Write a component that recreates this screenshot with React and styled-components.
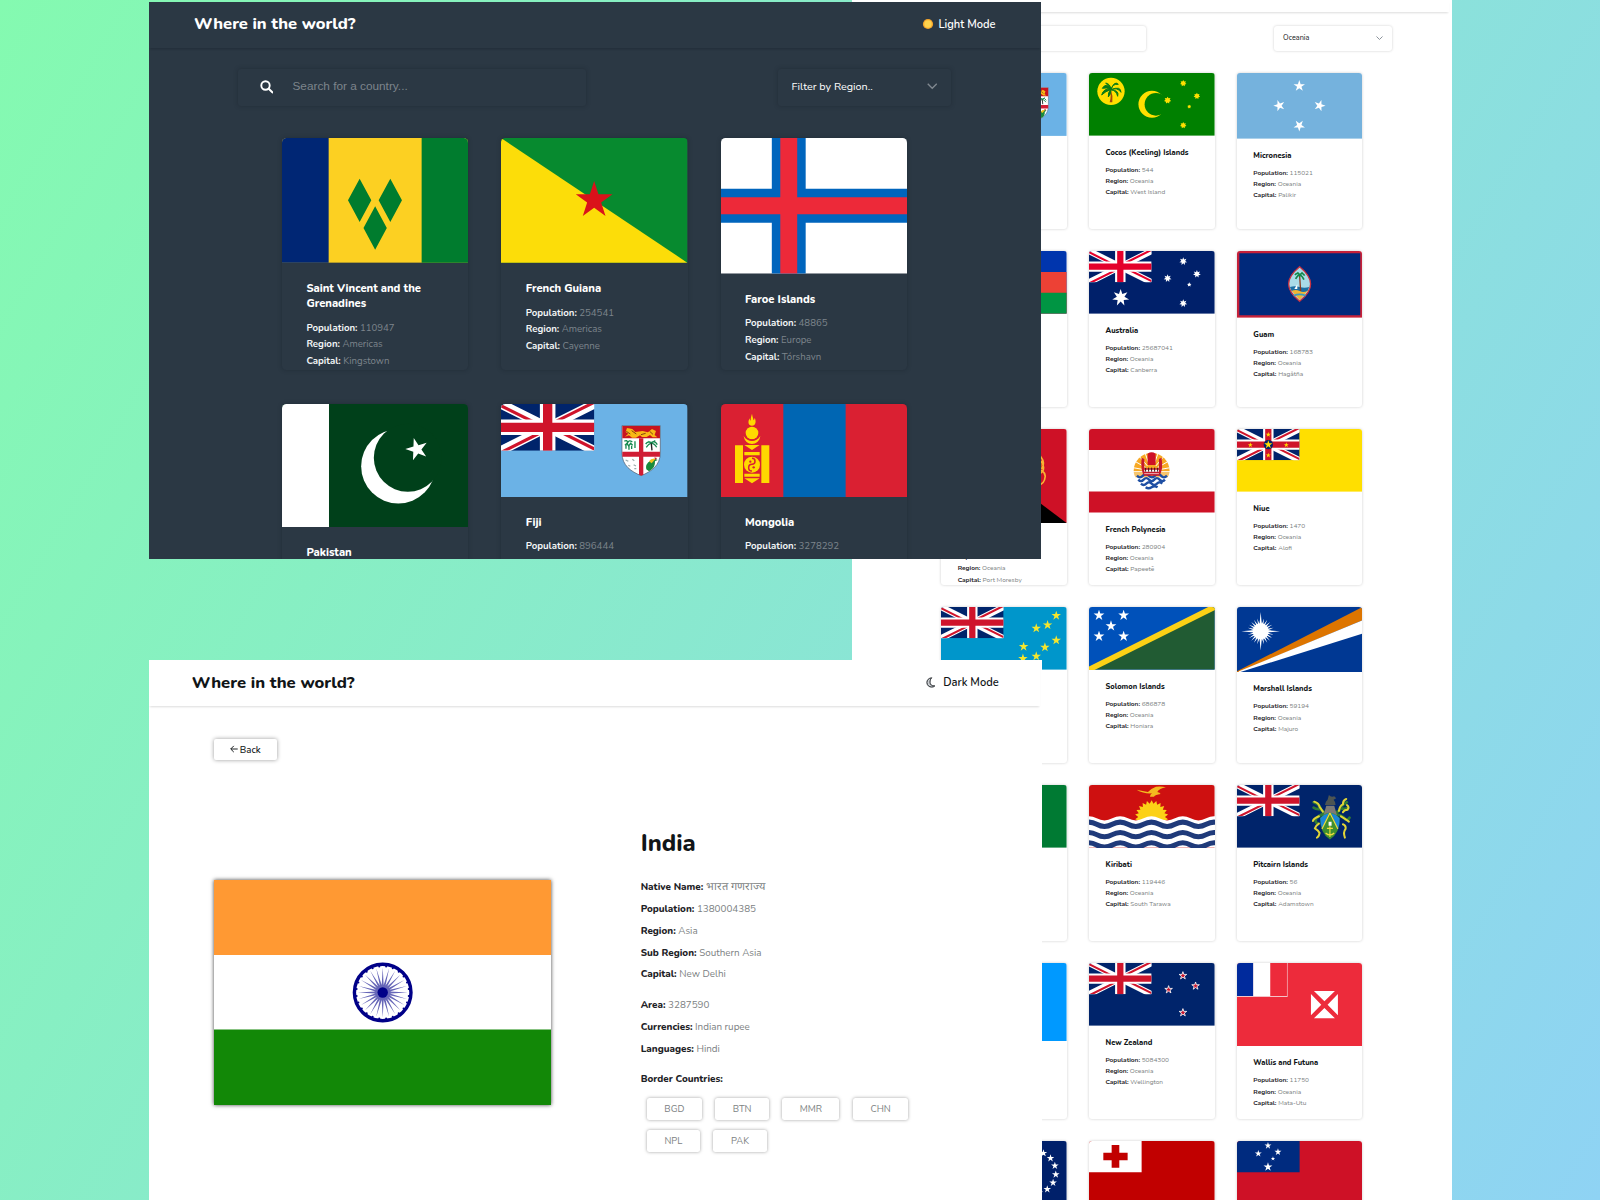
import React, { useId } from "react";
import styled, { createGlobalStyle, ThemeProvider } from "styled-components";

/* ---------- themes ---------- */

const dark = {
  bg: "#2b3844",
  text: "#ffffff",
  strong: "#f4f6f7",
  muted: "#7d858c",
  line: "rgba(18, 26, 34, 0.35)",
  rule: "rgba(18, 26, 34, 0.35)",
  u: 1,
};

const light = {
  bg: "#ffffff",
  text: "#111517",
  strong: "#1d2226",
  muted: "#7c7f82",
  line: "rgba(0, 0, 0, 0.2)",
  rule: "rgba(0, 0, 0, 0.14)",
  u: 0.674,
};

const detail = { ...light, u: 1 };

const px = (n) => ({ theme }) => `${n * theme.u}px`;

const GlobalStyle = createGlobalStyle`
  *, *::before, *::after { box-sizing: border-box; }
  html, body { margin: 0; padding: 0; }
  body { font-family: Nunito, Lato, "Open Sans", sans-serif; overflow: hidden; }
`;

/* ---------- canvas and windows ---------- */

const Canvas = styled.div`
  position: relative;
  width: 1600px;
  height: 1200px;
  overflow: hidden;
  background: linear-gradient(120deg, #84fab0 0%, #8fd3f4 100%);
`;

const Window = styled.section`
  position: absolute;
  left: ${(p) => p.$x}px;
  top: ${(p) => p.$y}px;
  width: ${(p) => p.$w}px;
  height: ${(p) => p.$h}px;
  overflow: hidden;
  background: ${({ theme }) => theme.bg};
  color: ${({ theme }) => theme.text};
`;

const Header = styled.header`
  display: flex;
  align-items: center;
  justify-content: space-between;
  height: ${(p) => p.$h}px;
  padding: 0 ${(p) => p.$right}px ${(p) => p.$lift || 0}px ${(p) => p.$left}px;
  margin-right: ${(p) => p.$short || 0}px;
  box-shadow: 0 2px 2px -1px ${({ theme }) => theme.rule};
`;

const Brand = styled.h1`
  margin: 0;
  font-size: ${(p) => p.$size}px;
  line-height: 22px;
  font-weight: 800;
  white-space: nowrap;
`;

const ModeToggle = styled.div`
  display: flex;
  align-items: center;
  gap: ${(p) => p.$gap}px;
  padding-top: 1.4px;
  font-size: 11.1px;
  line-height: 16px;
  font-weight: 600;
  white-space: nowrap;
  svg { display: block; margin-bottom: 1.4px; }
`;

/* ---------- filters ---------- */

const Filters = styled.div`
  display: flex;
  justify-content: space-between;
  width: ${(p) => p.$w}px;
  height: ${(p) => p.$h}px;
  margin: ${(p) => p.$top}px 0 0 ${(p) => p.$left}px;
`;

const Field = styled.div`
  display: flex;
  align-items: center;
  width: ${(p) => p.$w}px;
  padding: 0 ${px(14)};
  border-radius: 3px;
  box-shadow: 0 0 ${px(4)} ${({ theme }) => theme.line};
`;

const SearchField = styled(Field)`
  gap: 19.5px;
  padding-left: 21.5px;
`;

const Placeholder = styled.span`
  padding-bottom: 2.5px;
  font-family: "Liberation Sans", Arial, sans-serif;
  font-size: 11.8px;
  color: ${({ theme }) => theme.muted};
`;

const SelectField = styled(Field)`
  justify-content: space-between;
  padding-bottom: ${px(1.4)};
  font-size: ${px(10.8)};
  svg { display: block; }
`;

/* ---------- country cards ---------- */

const Grid = styled.div`
  display: grid;
  grid-template-columns: repeat(3, ${px(186.3)});
  grid-auto-rows: ${(p) => p.$row}px;
  gap: ${(p) => p.$gapY}px ${px(33)};
  margin: ${(p) => p.$top}px 0 0 ${(p) => p.$left}px;
`;

const CardBox = styled.article`
  overflow: hidden;
  border-radius: ${px(4.5)};
  box-shadow: 0 0 ${px(4.5)} ${({ theme }) => theme.line};
`;

const FlagSvg = styled.svg`
  display: block;
  width: 100%;
`;

const CardBody = styled.div`
  padding: ${px(17.8)} ${px(24.4)} 0;
`;

const CardTitle = styled.h2`
  margin: 0 0 ${px(8.6)};
  font-size: ${px(11.15)};
  line-height: ${px(15)};
  font-weight: 800;
`;

const Fact = styled.p`
  margin: 0;
  font-size: ${px(9.65)};
  line-height: ${px(16.8)};
  color: ${({ theme }) => theme.muted};
  white-space: nowrap;
  b {
    font-weight: 700;
    color: ${({ theme }) => theme.strong};
  }
`;

/* ---------- detail page ---------- */

const DetailBody = styled.div`
  padding: 33.3px 0 0 64.5px;
`;

const BackButton = styled.button`
  display: flex;
  align-items: center;
  justify-content: center;
  gap: 2px;
  width: 63.5px;
  height: 21px;
  padding: 0;
  border: 0;
  border-radius: 2px;
  background: #fff;
  box-shadow: 0 0 4px rgba(0, 0, 0, 0.4);
  font: 500 9.6px Nunito, Lato, sans-serif;
  color: #111517;
`;

const DetailColumns = styled.div`
  display: flex;
  align-items: flex-start;
  gap: 89.7px;
`;

const BigFlag = styled.div`
  width: 337.5px;
  height: 225px;
  margin-top: 119.8px;
  box-shadow: 0 0 4px rgba(0, 0, 0, 0.75);
`;

const Info = styled.div`
  width: 290px;
  padding-top: 68px;
`;

const CountryName = styled.h2`
  margin: 0 0 18.3px;
  font-size: 23.6px;
  line-height: 30px;
  font-weight: 800;
`;

const Facts = styled.div`
  margin-bottom: 8.5px;
  font-size: 9.85px;
  line-height: 21.85px;
  color: ${({ theme }) => theme.muted};
  white-space: nowrap;
  p { margin: 0; height: 21.85px; }
  b { font-weight: 800; color: ${({ theme }) => theme.strong}; }
  span:lang(hi) { font-size: 11px; line-height: 1; }
`;

const Borders = styled.div`
  display: flex;
  flex-wrap: wrap;
  gap: 10px 13.4px;
  margin-top: 1.4px;
  padding: 0 0 0 6.2px;
`;

const BorderTag = styled.span`
  display: flex;
  align-items: center;
  justify-content: center;
  width: ${(p) => p.$w}px;
  height: 22px;
  border-radius: 2.5px;
  box-shadow: 0 0 3.5px rgba(0, 0, 0, 0.38);
  font-size: 9.4px;
  color: ${({ theme }) => theme.muted};
`;

/* ---------- flag drawing helpers ---------- */

const starPoints = (cx, cy, r, n = 5, k = 0.382, rot = -90) =>
  Array.from({ length: n * 2 }, (_, i) => {
    const a = ((rot + (i * 180) / n) * Math.PI) / 180;
    const q = i % 2 ? r * k : r;
    return `${(cx + q * Math.cos(a)).toFixed(2)},${(cy + q * Math.sin(a)).toFixed(2)}`;
  }).join(" ");

const Star = ({ x, y, r, n, k, rot, fill = "#fff", ...rest }) => (
  <polygon points={starPoints(x, y, r, n, k, rot)} fill={fill} {...rest} />
);

const Jack = ({ w = 188, h = 94, blue = "#00246b", red = "#cf142b" }) => {
  const id = useId();
  return (
    <svg x="0" y="0" width={w} height={h} viewBox="0 0 60 30" preserveAspectRatio="none">
      <clipPath id={id}>
        <path d="M30,15h30v15zv15h-30zh-30v-15zv-15h30z" />
      </clipPath>
      <path d="M0,0h60v30H0z" fill={blue} />
      <path d="M0,0L60,30M60,0L0,30" stroke="#fff" strokeWidth="6" />
      <path d="M0,0L60,30M60,0L0,30" clipPath={`url(#${id})`} stroke={red} strokeWidth="4" />
      <path d="M30,0v30M0,15h60" stroke="#fff" strokeWidth="10" />
      <path d="M30,0v30M0,15h60" stroke={red} strokeWidth="6" />
    </svg>
  );
};

const Flag = ({ w = 377, h = 188, bg, children }) => (
  <FlagSvg viewBox={`0 0 ${w} ${h}`}>
    <rect width={w} height={h} fill={bg} />
    {children}
  </FlagSvg>
);

const SouthernCross = () => (
  <>
    <Star x={283} y={31} r={12} n={7} k={0.5} />
    <Star x={236} y={82} r={12} n={7} k={0.5} />
    <Star x={324} y={69} r={12} n={7} k={0.5} />
    <Star x={301} y={101} r={7} k={0.5} />
    <Star x={283} y={157} r={12} n={7} k={0.5} />
  </>
);

/* ---------- flags ---------- */

const SaintVincent = () => (
  <Flag w={559} h={374} bg="#fcd022">
    <path d="M0,0h140v374H0z" fill="#002674" />
    <path d="M419,0h140v374H419z" fill="#007c2e" />
    <path
      d="M233,122l35,65-35,65-35-65zM325,122l35,65-35,65-35-65zM279.500,205l35,65-35,65-35-65z"
      fill="#007c2e"
    />
  </Flag>
);

const FrenchGuiana = () => (
  <Flag w={559} h={374} bg="#078a2f">
    <path d="M0,0V374H559z" fill="#fcdd09" />
    <Star x={279.5} y={187} r={58} fill="#da121a" />
  </Flag>
);

const Faroe = () => (
  <Flag w={22} h={16} bg="#fff">
    <path d="M6,0h4v16H6zM0,6h22v4H0z" fill="#0065bd" />
    <path d="M7,0h2v16H7zM0,7h22v2H0z" fill="#ed2939" />
  </Flag>
);

const Pakistan = () => (
  <Flag w={559} h={370} bg="#00401a">
    <path d="M0,0h141v370H0z" fill="#fff" />
    <circle cx="349" cy="187" r="111.500" fill="#fff" />
    <circle cx="377.500" cy="161.500" r="102" fill="#00401a" />
    <Star x={405} y={136} r={35} rot={-34} />
  </Flag>
);

const Fiji = () => (
  <Flag w={559} h={280} bg="#6bb2e6">
    <Jack w={280} h={140} />
    <path d="M363,65h115v82c0,38-28,56-57.500,68C391,203,363,185,363,147z" fill="#fff" stroke="#4b5566" strokeWidth="2" />
    <path d="M364,66h113v37H364z" fill="#c8141e" />
    <path
      d="M372,98l10-9-8-5 4-12 16,3 9,9 22-3 16,4 12-10 12,6-4,12 8,7h-14l-8-7-10,6h-14l-6-5-12,7h-12l-9-7z"
      fill="#f9b916"
    />
    <path d="M376,82l12,8M392,80l14,10M420,92l14-4M446,82l10,9" stroke="#6b2a10" strokeWidth="2.500" />
    <path d="M414,103h13v109l-6,3-7-3zM364,143h113v15H364z" fill="#d01c34" />
    <g stroke="#16894f" strokeWidth="4" fill="none">
      <path d="M370,112q8-6 10,4q4-10 14-2M372,124l6-6 5,8 6-8 6,6M375,134v-12M384,137v-14M392,135v-10M402,112v20" />
      <path d="M434,120q8-10 17-4q10-8 18,6M436,130q8-12 15-12q10,0 16,12M442,112l9,5 12-7" />
    </g>
    <path d="M451,118l2,21" stroke="#222" strokeWidth="4" />
    <path d="M374,168l8,4M394,166l6,4M382,184l6,3M398,182l7,4M400,194h6" stroke="#9aa" strokeWidth="3.500" />
    <path d="M436,196q-4-16 12-26l14-6 8,4-8,4q2,20-18,30z" fill="#198a3c" />
    <path d="M444,172q6-10 20-8l-12,14z" fill="#f3c11c" />
    <path d="M460,160l8,2-4,6z" fill="#d01c34" />
  </Flag>
);

const Mongolia = () => (
  <Flag w={559} h={280} bg="#da2032">
    <path d="M187,0h187v280H187z" fill="#0066b3" />
    <g fill="#ffd900">
      <path d="M42,124h24v113H42zM121,124h24v113h-24z" />
      <path d="M93,29c2,12 4,14 5,20c2-2 3-5 3-8c5,10 4,24-8,24c-12,0-13-12-7-22c0,4 1,6 3,7c0-8 2-14 4-21z" />
      <circle cx="93" cy="87" r="19" />
      <path d="M68,96c4,32 46,32 50,0c-12,20-38,20-50,0z" />
      <path d="M70,123h46l-23,15zM70,144h46v10H70zM70,209h46v9H70zM70,223h46l-23,15z" />
      <circle cx="93" cy="182" r="24" />
    </g>
    <path d="M93,163a9,9 0 0 1 0,18a9,9 0 0 0 0,20" fill="none" stroke="#da2032" strokeWidth="4.500" />
    <circle cx="88" cy="173" r="3.500" fill="#da2032" />
    <circle cx="98" cy="190" r="3.500" fill="#da2032" />
    <path d="M81,104c8,5 16,5 24,0" fill="none" stroke="#da2032" strokeWidth="3" />
  </Flag>
);

const Cocos = () => (
  <Flag bg="#008000">
    <circle cx="66" cy="55" r="41" fill="#ffe000" />
    <path d="M66,50q6,16 4,38h-8q6-20 0-38z" fill="#a3480c" />
    <path
      d="M66,50q-14-24-26-4q14-4 26,4q-22-6-28,16q12-12 28-16q-10,8-8,22q8-8 8-22q16,2 20,20q6-18-20-20q20-8 30,8q0-20-30-8q4-18 22-16q-12-12-22,16q-2-18-16-20q8,6 16,20z"
      fill="#0a7a16"
      stroke="#0a7a16"
      strokeWidth="3"
    />
    <circle cx="189" cy="94" r="40.500" fill="#ffe000" />
    <circle cx="201" cy="94" r="34" fill="#008000" />
    {[[283, 31, 10], [236, 82, 11], [324, 69, 10], [301, 101, 6], [283, 157, 10]].map(([x, y, r]) => (
      <Star key={`${x}-${y}`} x={x} y={y} r={r} n={7} k={0.6} fill="#ffe000" />
    ))}
  </Flag>
);

const Micronesia = () => (
  <Flag h={197} bg="#75b2dd">
    <Star x={187} y={39} r={18} />
    <Star x={127} y={98} r={18} rot={180} />
    <Star x={248} y={98} r={18} rot={0} />
    <Star x={187} y={158} r={18} rot={90} />
  </Flag>
);

const Australia = () => (
  <Flag bg="#00206a">
    <Jack blue="#00206a" red="#e4002b" />
    <Star x={95} y={140} r={26} n={7} k={0.45} />
    <SouthernCross />
  </Flag>
);

const Guam = () => (
  <Flag h={200} bg="#c62139">
    <path d="M7,7h363v186H7z" fill="#00297b" />
    <path d="M188,47c44,36 44,68 0,104c-44-36-44-68 0-104z" fill="#a9dbe8" stroke="#c9303f" strokeWidth="4" />
    <path d="M161,116h54l-27,31z" fill="#f2b632" />
    <path d="M159,108q14-5 29,0t29,0l-5,11q-12,7-24,1t-24,0z" fill="#1c6ea4" />
    <path d="M188,72l3,48" stroke="#8c3a1e" strokeWidth="4" />
    <path d="M174,72q8-10 14,0q8-10 15,2M176,84q6-12 12-12q8,2 13,14M181,64l8,8 8-8" stroke="#12884a" strokeWidth="5" fill="none" />
    <path d="M172,114l9-14v14z" fill="#fff" />
    <path d="M170,134q18-8 36,0" stroke="#3a9cc0" strokeWidth="5" fill="none" />
  </Flag>
);

const FrenchPolynesia = () => (
  <Flag h={251} bg="#fff">
    <path d="M0,0h377v63H0zM0,188h377v63H0z" fill="#ce1126" />
    <path d="M134,126a54,54 0 0 1 108,0z" fill="#f7a823" />
    {Array.from({ length: 9 }, (_, i) => {
      const a = ((i * 20 + 190) * Math.PI) / 180;
      return (
        <line
          key={i}
          x1={188 + 20 * Math.cos(a)}
          y1={126 + 20 * Math.sin(a)}
          x2={188 + 54 * Math.cos(a)}
          y2={126 + 54 * Math.sin(a)}
          stroke="#fff"
          strokeWidth="3"
        />
      );
    })}
    <path d="M134,128h108q-2,12-6,18H140q-5-8-6-18z" fill="#f7c56c" />
    <path
      d="M144,140q9,10 18,0t18,0t18,0t18,0t18,0M148,152q8,9 16,0t16,0t16,0t16,0t16,0M156,164q8,8 16,0t16,0t16,0t16,0M170,175q9,6 18,0t18,0"
      fill="none"
      stroke="#1f4fa3"
      strokeWidth="7"
    />
    <path d="M176,74q12-8 24,0v34h-24z" fill="#ce1126" />
    <path d="M158,86q-4,40 8,54h44q14-14 8-54l-8,4v28h-44V90z" fill="#c61a2c" />
    <path d="M166,122h44v6h-44z" fill="#fff" />
    <path d="M170,116v12M179,116v12M188,116v12M197,116v12M206,116v12" stroke="#3d1a12" strokeWidth="3" />
    <path d="M166,134h44" stroke="#fff" strokeWidth="2" />
  </Flag>
);

const Niue = () => (
  <Flag bg="#ffdf00">
    <Jack />
    <circle cx="94" cy="47" r="14" fill="#00246b" />
    <Star x={94} y={47} r={13} fill="#ffdf00" />
    {[[40, 48], [148, 48], [94, 17], [94, 79]].map(([x, y]) => (
      <Star key={`${x}-${y}`} x={x} y={y} r={8} fill="#ffdf00" />
    ))}
  </Flag>
);

const PapuaNewGuinea = () => (
  <Flag h={282} bg="#ce1126">
    <path d="M0,0V282H377z" fill="#000" />
    <g fill="none" stroke="#f9b233" strokeWidth="5">
      <path d="M262,70q20-14 38,14q14,18 2,36M270,90q34-6 38,26q0,12-12,18M280,120q32,0 33,22q-2,26-25,28M276,140q20,4 22,14" />
    </g>
    <path d="M250,90q30-10 50,10q8,20-14,34q-30,10-40-10z" fill="#fcd116" />
    {[[50, 130], [94, 170], [60, 230], [20, 180], [80, 200]].map(([x, y]) => (
      <Star key={`${x}-${y}`} x={x} y={y} r={15} />
    ))}
  </Flag>
);

const NewCaledonia = () => (
  <Flag bg="#0035ad">
    <path d="M0,62.700h377v125.300H0z" fill="#ed4135" />
    <path d="M0,125.300h377V188H0z" fill="#009543" />
    <circle cx="126" cy="94" r="52" fill="#fae600" stroke="#000" strokeWidth="3" />
  </Flag>
);

const Tuvalu = () => (
  <Flag bg="#0096cb">
    <Jack />
    {[[346, 26], [320, 54], [286, 64], [346, 100], [312, 121], [248, 119], [286, 148], [246, 155]].map(([x, y]) => (
      <Star key={`${x}-${y}`} x={x} y={y} r={15} fill="#f5e62d" />
    ))}
  </Flag>
);

const Solomon = () => (
  <Flag bg="#0051ba">
    <path d="M0,188H377V0z" fill="#215b33" />
    <path d="M-10,193L387,-5" stroke="#fcd116" strokeWidth="17" />
    {[[30, 25], [104, 25], [66, 57], [30, 88], [104, 88]].map(([x, y]) => (
      <Star key={`${x}-${y}`} x={x} y={y} r={17} />
    ))}
  </Flag>
);

const Marshall = () => (
  <Flag h={196} bg="#003893">
    <path d="M0,193L377,0V40L4,196H0z" fill="#dd7500" />
    <path d="M4,194L377,40V80L8,196z" fill="#fff" />
    <circle cx="71" cy="73" r="24" fill="#fff" />
    <Star x={71} y={73} r={40} n={24} k={0.5} />
    <Star x={71} y={73} r={58} n={4} k={0.12} />
  </Flag>
);

const Norfolk = () => (
  <Flag bg="#007a33">
    <path d="M132,0h113v188H132z" fill="#fff" />
    <path d="M188,20l34,140h-68z" fill="#007a33" />
  </Flag>
);

const wave = (y) => `M-24,${y}q23.500,-13 47,0t47,0t47,0t47,0t47,0t47,0t47,0t47,0t47,0`;

const Kiribati = () => (
  <Flag bg="#ce1010">
    <Star x={188} y={96} r={50} n={22} k={0.8} fill="#fcd116" />
    <path
      d="M143,14q20,4 34,7q8-10 24-16q16-2 30,2q-20,4-26,14q8,2 10,6q-16,2-20,8h-12q0-6 6-10q-24,2-46-11z"
      fill="#f4b91f"
    />
    <path d={`${wave(100)}V188H-24z`} fill="#fff" />
    <path d={`${wave(118)}${wave(149)}${wave(180)}`} fill="none" stroke="#1f3a7a" strokeWidth="15" />
  </Flag>
);

/* Helm, mantling and shield of the Pitcairn arms */
const Pitcairn = () => (
  <Flag bg="#00246b">
    <Jack />
    <g fill="none" strokeLinecap="round">
      <path
        d="M262,82q-12-6-14-18q-8-10-18-12M250,72q-12,2-20-4M262,86q-20,6-26,18q-2,10 8,12M298,82q12-4 14-16q8-10 18-14M312,70q12,4 22-2M300,88q18,4 26,16q8,2 12-6"
        stroke="#2f7a35"
        strokeWidth="8"
      />
      <path
        d="M258,80q-6-10-10-14q-2-12-16-16M246,94q-16,6-18,14M246,116q-10,6-12,14q10,6 14,14q-2,12-8,14M306,78q2-16 12-20q0-12 10-16M330,60q8,6 2,14q-10,0-14,8M312,94q14,8 24,16M318,118q10,4 8,14q-8,10-2,26"
        stroke="#e0d437"
        strokeWidth="6"
      />
    </g>
    <path d="M268,62h24l8,28h-40z" fill="#7c7a76" />
    <path d="M264,60q2-12 8-16l4-14q6,8 16,4l6,6-8,4q6,6 6,16z" fill="#4d5553" />
    <path d="M250,98q28-30 58,0q2,44-29,66q-31-22-29-66z" fill="#3f8f2f" />
    <path d="M250,100q10-12 26-16l-20,48q-6-16-6-32zM308,100q-10-12-26-16l21,48q6-16 5-32z" fill="#1b86d8" />
    <path d="M279,84l-24,48M279,84l24,48M279,124v32M270,130h18M266,144q13,12 26,0" stroke="#f0dc3c" strokeWidth="3.500" fill="none" />
    <path d="M275,110h9v12h-9z" fill="#fff" />
  </Flag>
);

const Palau = () => (
  <Flag h={235} bg="#0099ff">
    <circle cx="165" cy="118" r="70" fill="#ff0" />
  </Flag>
);

const NewZealand = () => (
  <Flag bg="#00246b">
    <Jack />
    {[[282, 38], [239, 80], [320, 69], [282, 149]].map(([x, y]) => (
      <Star key={`${x}-${y}`} x={x} y={y} r={12} fill="#cc142b" stroke="#fff" strokeWidth="2.500" />
    ))}
  </Flag>
);

const Wallis = () => (
  <Flag h={250} bg="#ed2b3b">
    <path d="M0,0h152v102H0z" fill="#f6c3c8" />
    <path d="M0,0h49v99H0z" fill="#002a9c" />
    <path d="M49,0h51v99H49z" fill="#fff" />
    <path d="M100,0h50v99h-50z" fill="#ed2b3b" />
    <path d="M231,84h63l-31.500,31zM231,166h63l-31.500-31zM222,93v64l31-32zM303,93v64l-31-32z" fill="#fff" />
  </Flag>
);

const CookIslands = () => (
  <Flag bg="#00206a">
    <Jack />
    {Array.from({ length: 15 }, (_, i) => {
      const a = ((i * 24 + 6) * Math.PI) / 180;
      return <Star key={i} x={282 + 63 * Math.cos(a)} y={94 + 63 * Math.sin(a)} r={12} />;
    })}
  </Flag>
);

const Tonga = () => (
  <Flag bg="#c10000">
    <path d="M0,0h158v94H0z" fill="#fff" />
    <path d="M43,35h73v23H43zM68,12h23v68H68z" fill="#c10000" />
  </Flag>
);

const Samoa = () => (
  <Flag bg="#ce1126">
    <path d="M0,0h188v94H0z" fill="#002b7f" />
    <Star x={93} y={14} r={11} />
    <Star x={64} y={38} r={11} />
    <Star x={123} y={33} r={11} />
    <Star x={108} y={53} r={7} />
    <Star x={93} y={78} r={14} />
  </Flag>
);

const India = () => (
  <Flag w={337.5} h={225} bg="#fff">
    <path d="M0,0h337.500v75H0z" fill="#ff9933" />
    <path d="M0,149.500h337.500V225H0z" fill="#128807" />
    <circle cx="168.700" cy="112.500" r="28.300" fill="none" stroke="#000088" strokeWidth="3.400" />
    <Star x={168.7} y={112.5} r={25} n={24} k={0.3} fill="#000088" opacity="0.6" />
    {Array.from({ length: 24 }, (_, i) => {
      const a = ((i * 15 + 7.5) * Math.PI) / 180;
      return <circle key={i} cx={168.7 + 26.3 * Math.cos(a)} cy={112.5 + 26.3 * Math.sin(a)} r="1" fill="#000088" />;
    })}
    <circle cx="168.700" cy="112.500" r="5.200" fill="#000088" />
  </Flag>
);

/* ---------- icons ---------- */

const SunIcon = () => (
  <svg width="12" height="12" viewBox="0 0 12 12">
    <circle cx="6" cy="6" r="5.100" fill="#f7a62b" />
    <circle cx="6" cy="6" r="3.700" fill="#ffd34d" />
  </svg>
);

const MoonIcon = () => (
  <svg width="10" height="11" viewBox="0 0 10 11">
    <path
      d="M5.800,0.800C2.600,1 0.900,3.100 0.900,5.500c0,2.700 2.100,4.600 4.800,4.600c1.300,0 2.300-.4 3.100-1.200C5.800,9.200 4,7.600 4,5.200C4,3.300 4.600,1.900 5.800,0.800z"
      fill="#c9ccd0"
      stroke="#23272b"
      strokeWidth="1"
      strokeLinejoin="round"
    />
  </svg>
);

const SearchIcon = () => (
  <svg width="13.500" height="13.500" viewBox="0 0 13.500 13.500">
    <circle cx="5.500" cy="5.500" r="4.200" fill="none" stroke="#fff" strokeWidth="1.900" />
    <path d="M8.700,8.700L12.400,12.300" stroke="#fff" strokeWidth="2.100" strokeLinecap="round" />
  </svg>
);

const Chevron = ({ size }) => (
  <svg width={size} height={size * 0.6} viewBox="0 0 10 6">
    <path d="M0.700,0.700L5,5L9.300,0.700" fill="none" stroke="#808890" strokeWidth="1.300" />
  </svg>
);

const BackArrow = () => (
  <svg width="8" height="8" viewBox="0 0 8 8">
    <path d="M7.700,4H0.900M3.800,0.900L0.700,4L3.800,7.100" fill="none" stroke="#111517" strokeWidth="0.950" />
  </svg>
);

/* ---------- data ---------- */

const worldCountries = [
  { flag: SaintVincent, name: "Saint Vincent and the Grenadines", population: "110947", region: "Americas", capital: "Kingstown" },
  { flag: FrenchGuiana, name: "French Guiana", population: "254541", region: "Americas", capital: "Cayenne" },
  { flag: Faroe, name: "Faroe Islands", population: "48865", region: "Europe", capital: "Tórshavn" },
  { flag: Pakistan, name: "Pakistan" },
  { flag: Fiji, name: "Fiji", population: "896444" },
  { flag: Mongolia, name: "Mongolia", population: "3278292" },
];

const region = "Oceania";

const oceania = [
  { flag: Fiji },
  { flag: Cocos, name: "Cocos (Keeling) Islands", population: "544", region, capital: "West Island" },
  { flag: Micronesia, name: "Micronesia", population: "115021", region, capital: "Palikir" },
  { flag: NewCaledonia },
  { flag: Australia, name: "Australia", population: "25687041", region, capital: "Canberra" },
  { flag: Guam, name: "Guam", population: "168783", region, capital: "Hagåtña" },
  { flag: PapuaNewGuinea, name: "Papua New Guinea", population: "8947027", region, capital: "Port Moresby" },
  { flag: FrenchPolynesia, name: "French Polynesia", population: "280904", region, capital: "Papeetē" },
  { flag: Niue, name: "Niue", population: "1470", region, capital: "Alofi" },
  { flag: Tuvalu },
  { flag: Solomon, name: "Solomon Islands", population: "686878", region, capital: "Honiara" },
  { flag: Marshall, name: "Marshall Islands", population: "59194", region, capital: "Majuro" },
  { flag: Norfolk },
  { flag: Kiribati, name: "Kiribati", population: "119446", region, capital: "South Tarawa" },
  { flag: Pitcairn, name: "Pitcairn Islands", population: "56", region, capital: "Adamstown" },
  { flag: Palau },
  { flag: NewZealand, name: "New Zealand", population: "5084300", region, capital: "Wellington" },
  { flag: Wallis, name: "Wallis and Futuna", population: "11750", region, capital: "Mata-Utu" },
  { flag: CookIslands },
  { flag: Tonga },
  { flag: Samoa },
];

const indiaFacts = [
  [
    ["Native Name", "भारत गणराज्य", "hi"],
    ["Population", "1380004385"],
    ["Region", "Asia"],
    ["Sub Region", "Southern Asia"],
    ["Capital", "New Delhi"],
  ],
  [
    ["Area", "3287590"],
    ["Currencies", "Indian rupee"],
    ["Languages", "Hindi"],
  ],
];

const indiaBorders = [
  ["BGD", 55],
  ["BTN", 53.6],
  ["MMR", 57.2],
  ["CHN", 55.6],
  ["NPL", 53],
  ["PAK", 53.6],
];

/* ---------- page parts ---------- */

const CountryCard = ({ country }) => {
  const Picture = country.flag;
  return (
    <CardBox>
      <Picture />
      {country.name && (
        <CardBody>
          <CardTitle>{country.name}</CardTitle>
          {country.population && <Fact><b>Population:</b> {country.population}</Fact>}
          {country.region && <Fact><b>Region:</b> {country.region}</Fact>}
          {country.capital && <Fact><b>Capital:</b> {country.capital}</Fact>}
        </CardBody>
      )}
    </CardBox>
  );
};

const RegionPage = () => (
  <ThemeProvider theme={light}>
    <Window $x={852.4} $y={0} $w={599.4} $h={1200}>
      <Header $h={12} $left={0} $right={0} $short={3} />
      <Filters $w={480.3} $h={25} $top={14.2} $left={59.5}>
        <SearchField $w={234.5} />
        <SelectField $w={118.5}>
          Oceania
          <Chevron size={7} />
        </SelectField>
      </Filters>
      <Grid $row={156} $gapY={22} $top={22} $left={88.9}>
        {oceania.map((c, i) => <CountryCard key={i} country={c} />)}
      </Grid>
    </Window>
  </ThemeProvider>
);

const HomePage = () => (
  <ThemeProvider theme={dark}>
    <Window $x={149} $y={2} $w={891.5} $h={557}>
      <Header $h={46} $left={45} $right={45} $lift={2}>
        <Brand $size={16.5}>Where in the world?</Brand>
        <ModeToggle $gap={4.5}>
          <SunIcon />
          Light Mode
        </ModeToggle>
      </Header>
      <Filters $w={713} $h={37} $top={20.7} $left={89}>
        <SearchField $w={348}>
          <SearchIcon />
          <Placeholder>Search for a country...</Placeholder>
        </SearchField>
        <SelectField $w={173.5}>
          Filter by Region..
          <Chevron size={10.5} />
        </SelectField>
      </Filters>
      <Grid $row={232} $gapY={33.2} $top={32.8} $left={133}>
        {worldCountries.map((c) => <CountryCard key={c.name} country={c} />)}
      </Grid>
    </Window>
  </ThemeProvider>
);

const CountryPage = () => (
  <ThemeProvider theme={detail}>
    <Window $x={149} $y={659.5} $w={893} $h={540.5}>
      <Header $h={46} $left={42.8} $right={41.3} $short={2}>
        <Brand $size={16.65}>Where in the world?</Brand>
        <ModeToggle $gap={7.5}>
          <MoonIcon />
          Dark Mode
        </ModeToggle>
      </Header>
      <DetailBody>
        <BackButton type="button">
          <BackArrow />
          Back
        </BackButton>
        <DetailColumns>
          <BigFlag>
            <India />
          </BigFlag>
          <Info>
            <CountryName>India</CountryName>
            {indiaFacts.map((group) => (
              <Facts key={group[0][0]}>
                {group.map(([label, value, lang]) => (
                  <p key={label}><b>{label}:</b> <span lang={lang}>{value}</span></p>
                ))}
              </Facts>
            ))}
            <Facts>
              <p><b>Border Countries:</b></p>
            </Facts>
            <Borders>
              {indiaBorders.map(([code, w]) => (
                <BorderTag key={code} $w={w}>{code}</BorderTag>
              ))}
            </Borders>
          </Info>
        </DetailColumns>
      </DetailBody>
    </Window>
  </ThemeProvider>
);

export default function App() {
  return (
    <>
      <GlobalStyle />
      <Canvas>
        <RegionPage />
        <HomePage />
        <CountryPage />
      </Canvas>
    </>
  );
}
